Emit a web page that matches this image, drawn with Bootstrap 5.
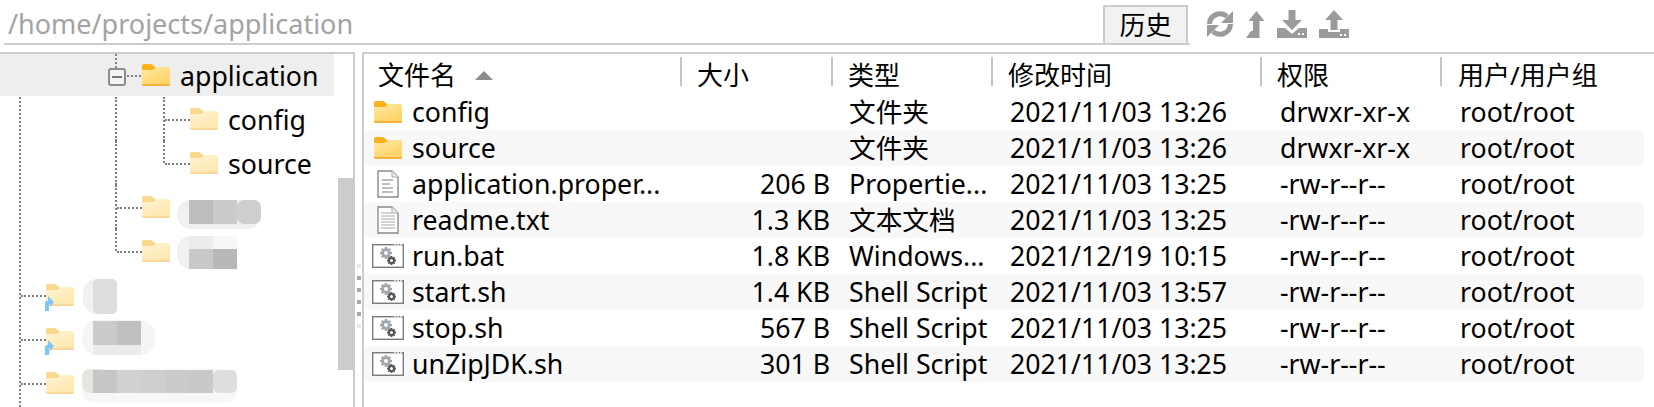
<!DOCTYPE html>
<html lang="zh">
<head>
<meta charset="UTF-8">
<title>application</title>
<link href="https://cdn.jsdelivr.net/npm/bootstrap@5.3.0/dist/css/bootstrap.min.css" rel="stylesheet">
<style>
html, body { height: 407px; overflow: hidden; }
body { background: #fff; color: #000; font-family: "Noto Sans", "Noto Sans CJK SC", sans-serif; font-size: 26.7px; line-height: 36px; }
svg { display: block; flex: none; }
.top-bar { height: 52px; padding-left: 4px; }
.path-box { width: 1186px; height: 45px; border-bottom: 2px solid #ccc; color: #a3a3a3; padding-left: 4px; line-height: 47px; font-size: 27px; }
.history-btn { width: 85px; height: 40px; margin-left: -87px; margin-top: 5px; background: #f2f2f2; border: 2px solid #ccc; border-radius: 0; padding: 0; font-size: 26px; line-height: 32px; color: #000; }
.tool-icons { gap: 12px; margin-left: 18px; padding-bottom: 4px; }
.split { height: 355px; }
.tree-pane { width: 355px; border-top: 2px solid #ccc; border-right: 2px solid #ccc; position: relative; overflow: hidden; }
.tree-guide { position: absolute; left: 19px; top: 0; bottom: 0; border-left: 2px dotted #808080; }
.tree-thumb { position: absolute; left: 338px; top: 124px; width: 16px; height: 192px; background: #ccc; }
.tree-row { height: 44px; position: relative; gap: 10px; white-space: nowrap; }
.tree-row.picked { width: 334px; height: 42px; background: #eee; margin-bottom: 1px; }
.lv1 { padding-left: 46px; }
.lv2 { padding-left: 142px; }
.lv3 { padding-left: 190px; }
.tname { position: relative; top: 1px; }
/* ligacoes da arvore */
.tie-v { position: absolute; top: 0; border-left: 2px dotted #808080; }
.tie-h { position: absolute; top: 22px; width: 25px; border-top: 2px dotted #808080; }
.at-115 { left: 115px; }
.at-163 { left: 163px; }
.h-full { height: 100%; }
.h-half { height: 22px; }
.h-stub { height: 14px; }
.lv1 .tie-h { left: 21px; }
.lv2 .tie-h { left: 117px; }
.lv3 .tie-h { left: 165px; }
.picked .tie-h { left: 127px; width: 14px; top: 21px; }
.minus-box { position: absolute; left: 108px; top: 14px; width: 18px; height: 18px; border: 2px solid #8c8c8c; border-radius: 3px; background: #f4f4f4; }
.minus-box::after { content: ""; position: absolute; left: 2px; right: 2px; top: 6px; height: 2px; background: #777; }
.pale { opacity: .5; }
.link-arrow { position: absolute; left: 43px; top: 23px; }
.smudge { align-self: flex-start; margin-left: -3px; }
.sm-a { margin-top: 15px; margin-left: -3px; }
.sm-b { margin-top: 7px; margin-left: -3px; }
.sm-c { margin-top: 6px; margin-left: -1px; }
.sm-d { margin-top: 3px; margin-left: -2px; }
.sm-e { margin-top: 8px; margin-left: -2px; }
.grip { width: 7px; flex: none; gap: 8px; padding-top: 212px; }
.grip span { width: 4px; height: 4px; background: #a8a8a8; display: block; margin-left: 2px; }
.grip span.faint { background: #e6e6e6; }
.list-pane { flex: 1; border-top: 2px solid #ccc; border-left: 2px solid #ccc; }
.head-row { height: 40px; font-size: 26px; }
.head-cell { position: relative; padding-left: 15px; white-space: nowrap; line-height: 42px; }
.head-cell.c-name { padding-left: 14px; }
.head-cell.c-user { padding-left: 16px; }
.head-cell::after { content: ""; position: absolute; right: 0; top: 3px; height: 29px; width: 2px; background: #c4c4c4; }
.head-cell:last-child::after { display: none; }
.sort-arrow { display: inline-block; width: 0; height: 0; border: 9px solid transparent; border-top: 0; border-bottom: 9px solid #8c8c8c; margin-left: 19px; vertical-align: 5px; }
.file-row { height: 36px; width: 1280px; display: flex; white-space: nowrap; }
.file-row:nth-child(even) { background: #f8f8f8; }
.c-name { width: 318px; padding-left: 10px; }
.c-size { width: 151px; }
.c-type { width: 160px; }
.c-time { width: 269px; }
.c-perm { width: 180px; }
.c-user { width: 200px; }
.file-row .c-name { gap: 4px; }
.file-row .c-size { text-align: right; padding-right: 1px; width: 149px; }
.file-row .c-type { padding-left: 18px; }
.file-row .c-time { padding-left: 19px; }
.file-row .c-perm { padding-left: 20px; }
.file-row .c-user { padding-left: 20px; }
.ico-slot { width: 40px; justify-content: center; margin-left: -6px; }
</style>
</head>
<body>

<svg width="0" height="0" class="position-absolute">
  <defs>
    <linearGradient id="fillFolder" x1="0" y1="0" x2="0.5" y2="1"><stop offset="0" stop-color="#ffeeb0"/><stop offset="1" stop-color="#ffd264"/></linearGradient>
    <symbol id="folder" viewBox="0 0 28 22">
      <path d="M0 2q0-2 2-2h7l4 3H26q2 0 2 2v15q0 2-2 2H2q-2 0-2-2z" fill="url(#fillFolder)"/>
      <path d="M0 2q0-2 2-2h7l4 3v2l-3 1H0z" fill="#fab21c"/>
      <path d="M0 20h28v1q0 1-2 1H2q-2 0-2-1z" fill="#f3b33b"/>
    </symbol>
    <symbol id="propfile" viewBox="0 0 22 28">
      <path d="M1 1h14l6 6v20H1z" fill="#fff" stroke="#8a8a8a" stroke-width="1.4"/>
      <path d="M15 1v6h6" fill="#eee" stroke="#aaa"/>
      <path d="M5 10h11M5 14h8M5 18h11M5 22h11" stroke="#bdbdbd" stroke-width="2"/>
    </symbol>
    <symbol id="txtfile" viewBox="0 0 22 28">
      <path d="M1 1h14l6 6v20H1z" fill="#fff" stroke="#8a8a8a" stroke-width="1.4"/>
      <path d="M15 1v6h6" fill="#eee" stroke="#aaa"/>
      <path d="M4 7h11M4 10h14M4 13h14M4 16h14M4 19h14M4 22h14" stroke="#a8a8a8" stroke-width="1.2"/>
    </symbol>
    <symbol id="gear" viewBox="0 0 12 12">
      <circle cx="6" cy="6" r="3.3" fill="none" stroke="currentColor" stroke-width="2.8"/>
      <g fill="currentColor">
        <rect x="4.800" y="0" width="2.400" height="12"/>
        <rect x="0" y="4.800" width="12" height="2.400"/>
        <rect x="4.800" y="0" width="2.400" height="12" transform="rotate(45 6 6)"/>
        <rect x="4.800" y="0" width="2.400" height="12" transform="rotate(-45 6 6)"/>
      </g>
      <circle cx="6" cy="6" r="2" fill="#fff"/>
    </symbol>
    <symbol id="execfile" viewBox="0 0 32 24">
      <rect x=".7" y=".7" width="30.600" height="22.600" fill="#fff" stroke="#7a7a7a" stroke-width="1.400"/>
      <path d="M22 .7h8" stroke="#d8d8d8" stroke-width="1.400" stroke-dasharray="2 1"/>
      <use href="#gear" x="8" y="3" width="12" height="12" color="#a0a6ae"/>
      <use href="#gear" x="15" y="12" width="9" height="9" color="#555"/>
    </symbol>
    <symbol id="shortcut" viewBox="0 0 11 15">
      <path d="M2 15V7q0-2 2-2h1V0l6 6-4 5V8H6v7z" fill="#7cc6f7"/>
    </symbol>
  </defs>
</svg>

<div class="top-bar d-flex align-items-start">
  <div class="path-box">/home/projects/application</div>
  <button type="button" class="btn history-btn">历史</button>
  <div class="tool-icons d-flex align-items-center align-self-stretch">
    <svg width="28" height="28" viewBox="0 0 28 28" fill="#9b9b9b">
      <path d="M3.500 14A10.500 10.500 0 0 1 21 6.500M24.500 14A10.500 10.500 0 0 1 7 21.500" fill="none" stroke="#9b9b9b" stroke-width="5"/>
      <path d="M27 1v12H15zM1 27V15h12z"/>
    </svg>
    <svg width="19" height="27" viewBox="0 0 19 27" fill="#9b9b9b"><path d="M10.500 0l8 10h-5v17H0l5-7h2V10H2.500z"/></svg>
    <svg width="30" height="28" viewBox="0 0 30 28" fill="#9b9b9b"><path d="M11.500 0h7v10h6.500L15 20 5 10h6.500z"/><path d="M0 18h8l7 6 7-6h8v10H0z"/><rect x="21" y="23" width="2" height="2" fill="#fff"/><rect x="25" y="23" width="2" height="2" fill="#fff"/></svg>
    <svg width="30" height="28" viewBox="0 0 30 28" fill="#9b9b9b"><path d="M15 0l9 10h-5.500v10h-7V10H6z"/><path d="M0 19h9v3h12v-3h9v9H0z"/><rect x="21" y="24" width="2" height="2" fill="#fff"/><rect x="25" y="24" width="2" height="2" fill="#fff"/></svg>
  </div>
</div>

<div class="split d-flex">
  <div class="tree-pane">
    <div class="tree-guide"></div>
    <div class="tree-thumb"></div>

    <div class="tree-row picked lv2 d-flex align-items-center">
      <span class="tie-v at-115 h-stub"></span>
      <span class="minus-box"></span>
      <span class="tie-h"></span>
      <svg width="28" height="22"><use href="#folder"/></svg>
      <span class="tname">application</span>
    </div>
    <div class="tree-row lv3 d-flex align-items-center">
      <span class="tie-v at-115 h-full"></span>
      <span class="tie-v at-163 h-full"></span>
      <span class="tie-h"></span>
      <svg class="pale" width="28" height="22"><use href="#folder"/></svg>
      <span class="tname">config</span>
    </div>
    <div class="tree-row lv3 d-flex align-items-center">
      <span class="tie-v at-115 h-full"></span>
      <span class="tie-v at-163 h-half"></span>
      <span class="tie-h"></span>
      <svg class="pale" width="28" height="22"><use href="#folder"/></svg>
      <span class="tname">source</span>
    </div>
    <div class="tree-row lv2 d-flex align-items-center">
      <span class="tie-v at-115 h-full"></span>
      <span class="tie-h"></span>
      <svg class="pale" width="28" height="22"><use href="#folder"/></svg>
      <svg class="smudge sm-a" width="84" height="29">
        <rect width="84" height="29" rx="14" fill="#f0f0ee"/><rect x="12" width="24" height="24" fill="#bdbdbd"/><rect x="36" width="24" height="24" fill="#cbcbcb"/><rect x="60" width="24" height="24" rx="7" fill="#cecece"/>
      </svg>
    </div>
    <div class="tree-row lv2 d-flex align-items-center">
      <span class="tie-v at-115 h-half"></span>
      <span class="tie-h"></span>
      <svg class="pale" width="28" height="22"><use href="#folder"/></svg>
      <svg class="smudge sm-b" width="60" height="33">
        <rect width="60" height="33" rx="14" fill="#f1f1ef"/><rect x="12" width="24" height="13" fill="#ececec"/><rect x="36" width="24" height="13" fill="#f6f7f7"/><rect x="12" y="13" width="24" height="20" fill="#c8c8c8"/><rect x="36" y="13" width="24" height="20" fill="#b6b8b6"/>
      </svg>
    </div>
    <div class="tree-row lv1 d-flex align-items-center">
      <span class="tie-h"></span>
      <svg class="pale" width="28" height="22"><use href="#folder"/></svg>
      <svg class="link-arrow" width="11" height="15"><use href="#shortcut"/></svg>
      <svg class="smudge sm-c" width="34" height="35">
        <rect width="34" height="35" rx="14" fill="#f1f1ef"/><rect x="10" width="24" height="35" rx="5" fill="#dcdddd"/>
      </svg>
    </div>
    <div class="tree-row lv1 d-flex align-items-center">
      <span class="tie-h"></span>
      <svg class="pale" width="28" height="22"><use href="#folder"/></svg>
      <svg class="link-arrow" width="11" height="15"><use href="#shortcut"/></svg>
      <svg class="smudge sm-d" width="73" height="35">
        <rect width="73" height="35" rx="15" fill="#f4f5f7"/><rect x="11" y="25" width="48" height="10" fill="#ebebeb"/><rect x="11" y="1" width="24" height="24" fill="#cbcbcb"/><rect x="35" y="1" width="24" height="24" fill="#c1c0bf"/>
      </svg>
    </div>
    <div class="tree-row lv1 d-flex align-items-center">
      <span class="tie-h"></span>
      <svg class="pale" width="28" height="22"><use href="#folder"/></svg>
      <svg class="smudge sm-e" width="155" height="34">
        <rect width="155" height="34" rx="12" fill="#f7f7f6"/><rect width="24" height="24" rx="8" fill="#e6e5df"/>
        <rect x="11" y="1" width="24" height="23" fill="#c6c6c6"/><rect x="35" y="1" width="24" height="23" fill="#d0d1d2"/><rect x="59" y="1" width="24" height="23" fill="#cfcfcd"/><rect x="83" y="1" width="24" height="23" fill="#cbcbcb"/><rect x="107" y="1" width="24" height="23" fill="#c9c9c9"/><rect x="131" y="1" width="24" height="23" rx="6" fill="#dedede"/>
      </svg>
    </div>
  </div>

  <div class="grip d-flex flex-column"><span class="faint"></span><span></span><span></span><span></span><span></span><span class="faint"></span></div>

  <div class="list-pane">
    <div class="head-row d-flex">
      <div class="head-cell c-name">文件名<i class="sort-arrow"></i></div>
      <div class="head-cell c-size">大小</div>
      <div class="head-cell c-type">类型</div>
      <div class="head-cell c-time">修改时间</div>
      <div class="head-cell c-perm">权限</div>
      <div class="head-cell c-user">用户/用户组</div>
    </div>
    <div id="file-list"></div>
  </div>
</div>

<script>
  // Lista de arquivos
  const files = [
    ['folder', 'config', '', '文件夹', '2021/11/03 13:26', 'drwxr-xr-x'],
    ['folder', 'source', '', '文件夹', '2021/11/03 13:26', 'drwxr-xr-x'],
    ['propfile', 'application.proper...', '206 B', 'Propertie...', '2021/11/03 13:25', '-rw-r--r--'],
    ['txtfile', 'readme.txt', '1.3 KB', '文本文档', '2021/11/03 13:25', '-rw-r--r--'],
    ['execfile', 'run.bat', '1.8 KB', 'Windows...', '2021/12/19 10:15', '-rw-r--r--'],
    ['execfile', 'start.sh', '1.4 KB', 'Shell Script', '2021/11/03 13:57', '-rw-r--r--'],
    ['execfile', 'stop.sh', '567 B', 'Shell Script', '2021/11/03 13:25', '-rw-r--r--'],
    ['execfile', 'unZipJDK.sh', '301 B', 'Shell Script', '2021/11/03 13:25', '-rw-r--r--']
  ];
  const iconSize = { folder: [28, 22], propfile: [22, 28], txtfile: [22, 28], execfile: [32, 24] };
  document.getElementById('file-list').innerHTML = files.map(f => `
    <div class="file-row">
      <div class="c-name d-flex align-items-center">
        <span class="ico-slot d-flex"><svg width="${iconSize[f[0]][0]}" height="${iconSize[f[0]][1]}"><use href="#${f[0]}"/></svg></span>
        <span>${f[1]}</span>
      </div>
      <div class="c-size">${f[2]}</div>
      <div class="c-type">${f[3]}</div>
      <div class="c-time">${f[4]}</div>
      <div class="c-perm">${f[5]}</div>
      <div class="c-user">root/root</div>
    </div>`).join('');
</script>
<script src="https://cdn.jsdelivr.net/npm/bootstrap@5.3.0/dist/js/bootstrap.bundle.min.js"></script>
</body>
</html>
